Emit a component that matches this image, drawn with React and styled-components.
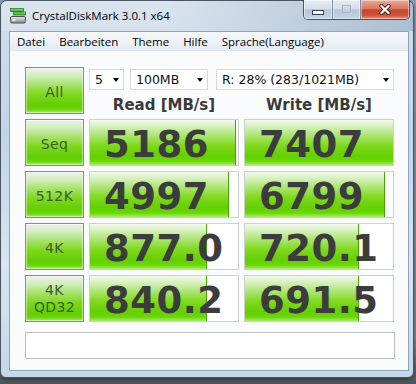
import React from "react";
import styled, { createGlobalStyle } from "styled-components";

const GlobalStyle = createGlobalStyle`
  html, body {
    margin: 0;
    padding: 0;
  }
  body {
    width: 416px;
    height: 384px;
    overflow: hidden;
    background: linear-gradient(to bottom, #8ea3ba 0%, #7a8fa6 88%, #4f545b 100%);
    font-family: "Open Sans", "DejaVu Sans", sans-serif;
  }
`;

const greenFill = `linear-gradient(
  to bottom,
  #f4faef 0%,
  #d6f1bd 14%,
  #a8e46c 36%,
  #80d91e 56%,
  #63d000 80%,
  #6ad606 91%,
  #a6ec6c 100%
)`;

const Window = styled.div`
  box-sizing: border-box;
  width: 414px;
  height: 378px;
  display: flex;
  flex-direction: column;
  padding: 0 4px 6px 8px;
  border: 1px solid #4a5563;
  border-radius: 7px 7px 6px 6px;
  background: linear-gradient(
    to bottom,
    #d3dfeb 0%,
    #c2d4e8 35%,
    #d8e4f0 70%,
    #c6d7ea 100%
  );
  box-shadow: 0 1px 4px rgba(0, 0, 0, 0.5);
`;

const TitleBar = styled.div`
  height: 30px;
  display: flex;
  align-items: flex-start;
  background: linear-gradient(to right, rgba(255, 255, 255, 0.15) 40%, rgba(90, 120, 155, 0.3));
  margin: 0 -4px 0 -8px;
  padding: 0 4px 0 8px;
  border-radius: 6px 6px 0 0;
`;

const AppIcon = styled.svg`
  margin: 7px 0 0 1px;
  flex: none;
`;

const Title = styled.div`
  margin-left: 6px;
  line-height: 30px;
  font-size: 11.5px;
  color: #000;
`;

const Spacer = styled.div`
  flex: 1;
`;

const CaptionGroup = styled.div`
  display: flex;
  height: 20px;
  margin: -1px -1px 0 0;
  border: 1px solid rgba(35, 45, 62, 0.75);
  border-top: none;
  border-radius: 0 0 5px 5px;
  overflow: hidden;
  box-sizing: border-box;
`;

const CaptionButton = styled.div`
  width: ${(p) => p.w}px;
  display: flex;
  align-items: center;
  justify-content: center;
  box-shadow: inset 0 0 0 1px rgba(255, 255, 255, 0.45);
  border-left: ${(p) => (p.first ? "none" : "1px solid #7b8ca2")};
  background: ${(p) =>
    p.close
      ? "linear-gradient(to bottom, #e9a899 0%, #db7a63 45%, #c6452b 52%, #cf5337 80%, #e49279 100%)"
      : "linear-gradient(to bottom, #e6edf5 0%, #d4dee9 45%, #b7c7d9 52%, #c6d4e3 100%)"};
`;

const Client = styled.div`
  flex: 1;
  display: flex;
  flex-direction: column;
  border: 1px solid #8fa3b9;
  background: #fafbfc;
`;

const MenuBar = styled.div`
  height: 19px;
  display: flex;
  align-items: center;
  background: linear-gradient(to bottom, #f7f9fc, #e4ebf4);
  border-bottom: 1px solid #e2e8f0;
  box-sizing: border-box;
`;

const MenuItem = styled.span`
  padding: 0 7px;
  font-size: 11.5px;
  color: #000;
`;

const Content = styled.div`
  padding: 16px 0 0 15px;
`;

const Grid = styled.div`
  display: grid;
  grid-template-columns: 59px 150px 150px;
  grid-template-rows: repeat(5, 47px);
  column-gap: 5px;
  row-gap: 5px;
`;

const TestButton = styled.div`
  box-sizing: border-box;
  display: flex;
  flex-direction: column;
  align-items: center;
  justify-content: center;
  padding-top: ${(p) => (p.twoLine ? 1 : 4)}px;
  border: 1px solid #8a8a8a;
  background: linear-gradient(
    to bottom,
    #eef2ec 0%,
    #d4eec0 16%,
    #a6e26a 38%,
    #80d820 58%,
    #62cf00 82%,
    #6bd608 92%,
    #a4ea6a 100%
  );
  box-shadow: inset 0 0 0 1px rgba(255, 255, 255, 0.45);
  font-family: "DejaVu Sans", sans-serif;
  font-size: 14px;
  line-height: 17px;
  letter-spacing: 0.4px;
  color: #3d5c2c;
`;

const TopPanel = styled.div`
  grid-column: 2 / 4;
  display: flex;
  flex-direction: column;
  padding-top: 2px;
`;

const ComboRow = styled.div`
  display: flex;
  height: 22px;
`;

const Combo = styled.div`
  box-sizing: border-box;
  width: ${(p) => p.w}px;
  margin-left: ${(p) => p.gap || 0}px;
  display: flex;
  align-items: center;
  justify-content: space-between;
  padding: 0 4px 0 5px;
  border: 1px solid #d8d8d8;
  background: #fff;
  font-family: "DejaVu Sans", sans-serif;
  font-size: 12.5px;
  color: #111;
`;

const Arrow = styled.span`
  width: 0;
  height: 0;
  border-left: 3.5px solid transparent;
  border-right: 3.5px solid transparent;
  border-top: 4px solid #000;
`;

const HeaderRow = styled.div`
  display: grid;
  grid-template-columns: 150px 150px;
  column-gap: 5px;
  padding-top: 6px;
`;

const Header = styled.div`
  text-align: center;
  font-family: "DejaVu Sans", sans-serif;
  font-weight: bold;
  font-size: 15px;
  line-height: 18px;
  color: #3a3a3a;
`;

const ResultBox = styled.div`
  position: relative;
  box-sizing: border-box;
  display: flex;
  align-items: center;
  padding: 4px 0 0 14px;
  border: 1px solid #cfcfcf;
  background: #fff;
  overflow: hidden;
`;

const Fill = styled.div`
  position: absolute;
  left: 0;
  top: 0;
  bottom: 0;
  box-sizing: border-box;
  background: ${greenFill};
  border-right: ${(p) => (p.full ? "none" : "1px solid #44a400")};
`;

const Value = styled.span`
  position: relative;
  font-family: "DejaVu Sans", sans-serif;
  font-weight: bold;
  font-size: 37px;
  line-height: 37px;
  letter-spacing: 0.5px;
  color: #3c3c3c;
`;

const Comment = styled.div`
  box-sizing: border-box;
  width: 370px;
  height: 27px;
  margin-top: 10px;
  border: 1px solid #bdbdbd;
  background: #fff;
`;

const rows = [
  { label: ["Seq"], read: "5186", rw: 146, write: "7407", ww: 148 },
  { label: ["512K"], read: "4997", rw: 139, write: "6799", ww: 140 },
  { label: ["4K"], read: "877.0", rw: 117, write: "720.1", ww: 114 },
  { label: ["4K", "QD32"], read: "840.2", rw: 117, write: "691.5", ww: 114 },
];

const DiskIcon = () => (
  <AppIcon width="16" height="16" viewBox="0 0 16 16">
    <defs>
      <linearGradient id="gbar" x1="0" y1="0" x2="0" y2="1">
        <stop offset="0" stopColor="#9be86a" />
        <stop offset="1" stopColor="#2ea52e" />
      </linearGradient>
      <linearGradient id="disk" x1="0" y1="0" x2="0" y2="1">
        <stop offset="0" stopColor="#e8e8e8" />
        <stop offset="1" stopColor="#8c8c8c" />
      </linearGradient>
    </defs>
    <rect x="0.5" y="0.5" width="13" height="3" fill="url(#gbar)" stroke="#2b7a2b" strokeWidth="0.8" />
    <rect x="3.5" y="4" width="12" height="3" fill="url(#gbar)" stroke="#2b7a2b" strokeWidth="0.8" />
    <rect x="0.5" y="8.5" width="15" height="6.5" rx="1.5" fill="url(#disk)" stroke="#505050" />
    <rect x="2.5" y="11.5" width="3" height="1.2" fill="#ffffff" />
  </AppIcon>
);

const CloseGlyph = () => (
  <svg width="12" height="11" viewBox="0 0 12 11">
    <path d="M2.5 2 L9.5 9 M9.5 2 L2.5 9" stroke="#4a1e16" strokeWidth="4" strokeLinecap="square" />
    <path d="M2.5 2 L9.5 9 M9.5 2 L2.5 9" stroke="#ffffff" strokeWidth="2.2" strokeLinecap="square" />
  </svg>
);

const MinGlyph = () => (
  <svg width="13" height="6" viewBox="0 0 13 6" style={{ marginTop: 6 }}>
    <rect x="0.5" y="0.5" width="11" height="4" fill="#ffffff" stroke="#3a4656" />
  </svg>
);

const MaxGlyph = () => (
  <svg width="10" height="9" viewBox="0 0 10 9">
    <rect x="0.5" y="0.5" width="8" height="7" fill="none" stroke="#a9b6c6" />
    <rect x="2" y="2.5" width="5" height="3.5" fill="none" stroke="#c7d2de" />
  </svg>
);

const Result = ({ value, width }) => (
  <ResultBox>
    <Fill full={width >= 148} style={{ width: `${width}px` }} />
    <Value>{value}</Value>
  </ResultBox>
);

export default function App() {
  return (
    <>
      <GlobalStyle />
      <Window>
        <TitleBar>
          <DiskIcon />
          <Title>CrystalDiskMark 3.0.1 x64</Title>
          <Spacer />
          <CaptionGroup>
            <CaptionButton w={28} first>
              <MinGlyph />
            </CaptionButton>
            <CaptionButton w={27}>
              <MaxGlyph />
            </CaptionButton>
            <CaptionButton w={48} close>
              <CloseGlyph />
            </CaptionButton>
          </CaptionGroup>
        </TitleBar>
        <Client>
          <MenuBar>
            <MenuItem>Datei</MenuItem>
            <MenuItem>Bearbeiten</MenuItem>
            <MenuItem>Theme</MenuItem>
            <MenuItem>Hilfe</MenuItem>
            <MenuItem>Sprache(Language)</MenuItem>
          </MenuBar>
          <Content>
            <Grid>
              <TestButton>All</TestButton>
              <TopPanel>
                <ComboRow>
                  <Combo w={35}>
                    5<Arrow />
                  </Combo>
                  <Combo w={78} gap={6}>
                    100MB<Arrow />
                  </Combo>
                  <Combo w={178} gap={8}>
                    R: 28% (283/1021MB)<Arrow />
                  </Combo>
                </ComboRow>
                <HeaderRow>
                  <Header>Read [MB/s]</Header>
                  <Header>Write [MB/s]</Header>
                </HeaderRow>
              </TopPanel>
              {rows.map((r) => (
                <React.Fragment key={r.label.join(" ")}>
                  <TestButton twoLine={r.label.length > 1}>
                    {r.label.map((l) => (
                      <span key={l}>{l}</span>
                    ))}
                  </TestButton>
                  <Result value={r.read} width={r.rw} />
                  <Result value={r.write} width={r.ww} />
                </React.Fragment>
              ))}
            </Grid>
            <Comment />
          </Content>
        </Client>
      </Window>
    </>
  );
}
